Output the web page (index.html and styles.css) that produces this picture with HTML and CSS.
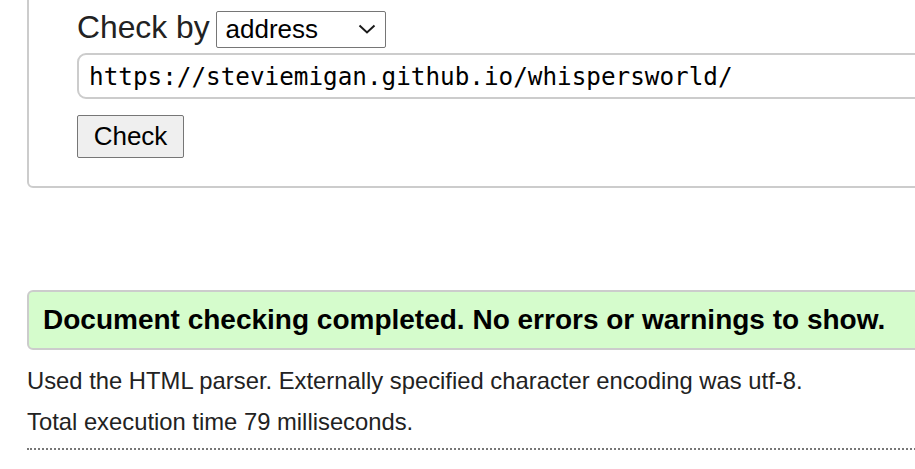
FILE: index.html
```html
<!DOCTYPE html>
<html lang="en">
<head>
<meta charset="utf-8">
<title>Nu Html Checker</title>
<link rel="stylesheet" href="styles.css">
</head>
<body>
<div class="page">
  <form class="check-form">
    <fieldset class="form-box">
      <div class="check-by">
        <span class="check-label">Check by</span>
        <span class="select-wrap">
          <select class="doc-select">
            <option>address</option>
            <option>file upload</option>
            <option>text input</option>
          </select>
          <svg class="chevron" width="18" height="10" viewBox="0 0 18 10" aria-hidden="true"><polyline points="1.5,1.5 9,8.5 16.5,1.5" fill="none" stroke="#1a1a1a" stroke-width="2"/></svg>
        </span>
      </div>
      <input class="url-input" type="url" value="https://steviemigan.github.io/whispersworld/">
      <div class="submit-row">
        <button class="check-btn" type="button">Check</button>
      </div>
    </fieldset>
  </form>

  <div class="success">Document checking completed. No errors or warnings to show.</div>
  <p class="details first">Used the HTML parser. Externally specified character encoding was utf-8.</p>
  <p class="details">Total execution time 79 milliseconds.</p>
  <hr class="dotted-rule">
</div>
</body>
</html>
```

FILE: styles.css
```css
html, body {
  margin: 0;
  padding: 0;
  overflow: hidden;
  background: #fff;
}

body {
  font-family: "Liberation Sans", Arial, sans-serif;
  color: #222;
}

.page {
  width: 1000px;
  padding-left: 27px;
}

.check-form {
  margin: 0;
}

.form-box {
  margin: -12px 0 0 0;
  padding: 19px 0 28px 48px;
  border: 2px solid #cccccc;
  border-radius: 6px;
  display: flex;
  flex-direction: column;
  align-items: flex-start;
}

.check-by {
  display: flex;
  align-items: baseline;
  gap: 6px;
}

.check-label {
  font-size: 31.8px;
  color: #222;
}

.select-wrap {
  position: relative;
  display: inline-flex;
}

.doc-select {
  -webkit-appearance: none;
  appearance: none;
  box-sizing: border-box;
  width: 170px;
  height: 37px;
  margin: 0;
  padding: 0 30px 0 9px;
  font-family: "Liberation Sans", Arial, sans-serif;
  font-size: 26px;
  color: #000;
  background: #fff;
  border: 1px solid #767676;
  border-radius: 2px;
}

.chevron {
  position: absolute;
  right: 9.5px;
  top: 13.5px;
  pointer-events: none;
}

.url-input {
  box-sizing: border-box;
  margin: 5px 0 0 0;
  width: 900px;
  height: 46px;
  padding: 2px 10px 0 10px;
  font-family: "DejaVu Sans Mono", "Liberation Mono", monospace;
  font-size: 24.3px;
  color: #000;
  background: #fff;
  border: 2px solid #cccccc;
  border-radius: 9px;
  outline: none;
}

.submit-row {
  margin-top: 16px;
}

.check-btn {
  box-sizing: border-box;
  height: 43px;
  width: 107px;
  margin: 0;
  padding: 0;
  font-family: "Liberation Sans", Arial, sans-serif;
  font-size: 26px;
  color: #000;
  background: #efefef;
  border: 1px solid #767676;
  border-radius: 2px;
}

.success {
  margin-top: 102px;
  padding: 12px 14px;
  font-size: 28px;
  font-weight: bold;
  color: #000;
  background: #d5fccc;
  border: 2px solid #cccccc;
  border-radius: 6px;
}

.details {
  margin: 14.5px 0 0 0;
  font-size: 23.8px;
  line-height: 27px;
  color: #222;
}

.details.first {
  margin-top: 17px;
}

.dotted-rule {
  margin: 13px 0 0 0;
  height: 0;
  border: 0;
  border-top: 2px dotted #777;
}
```
